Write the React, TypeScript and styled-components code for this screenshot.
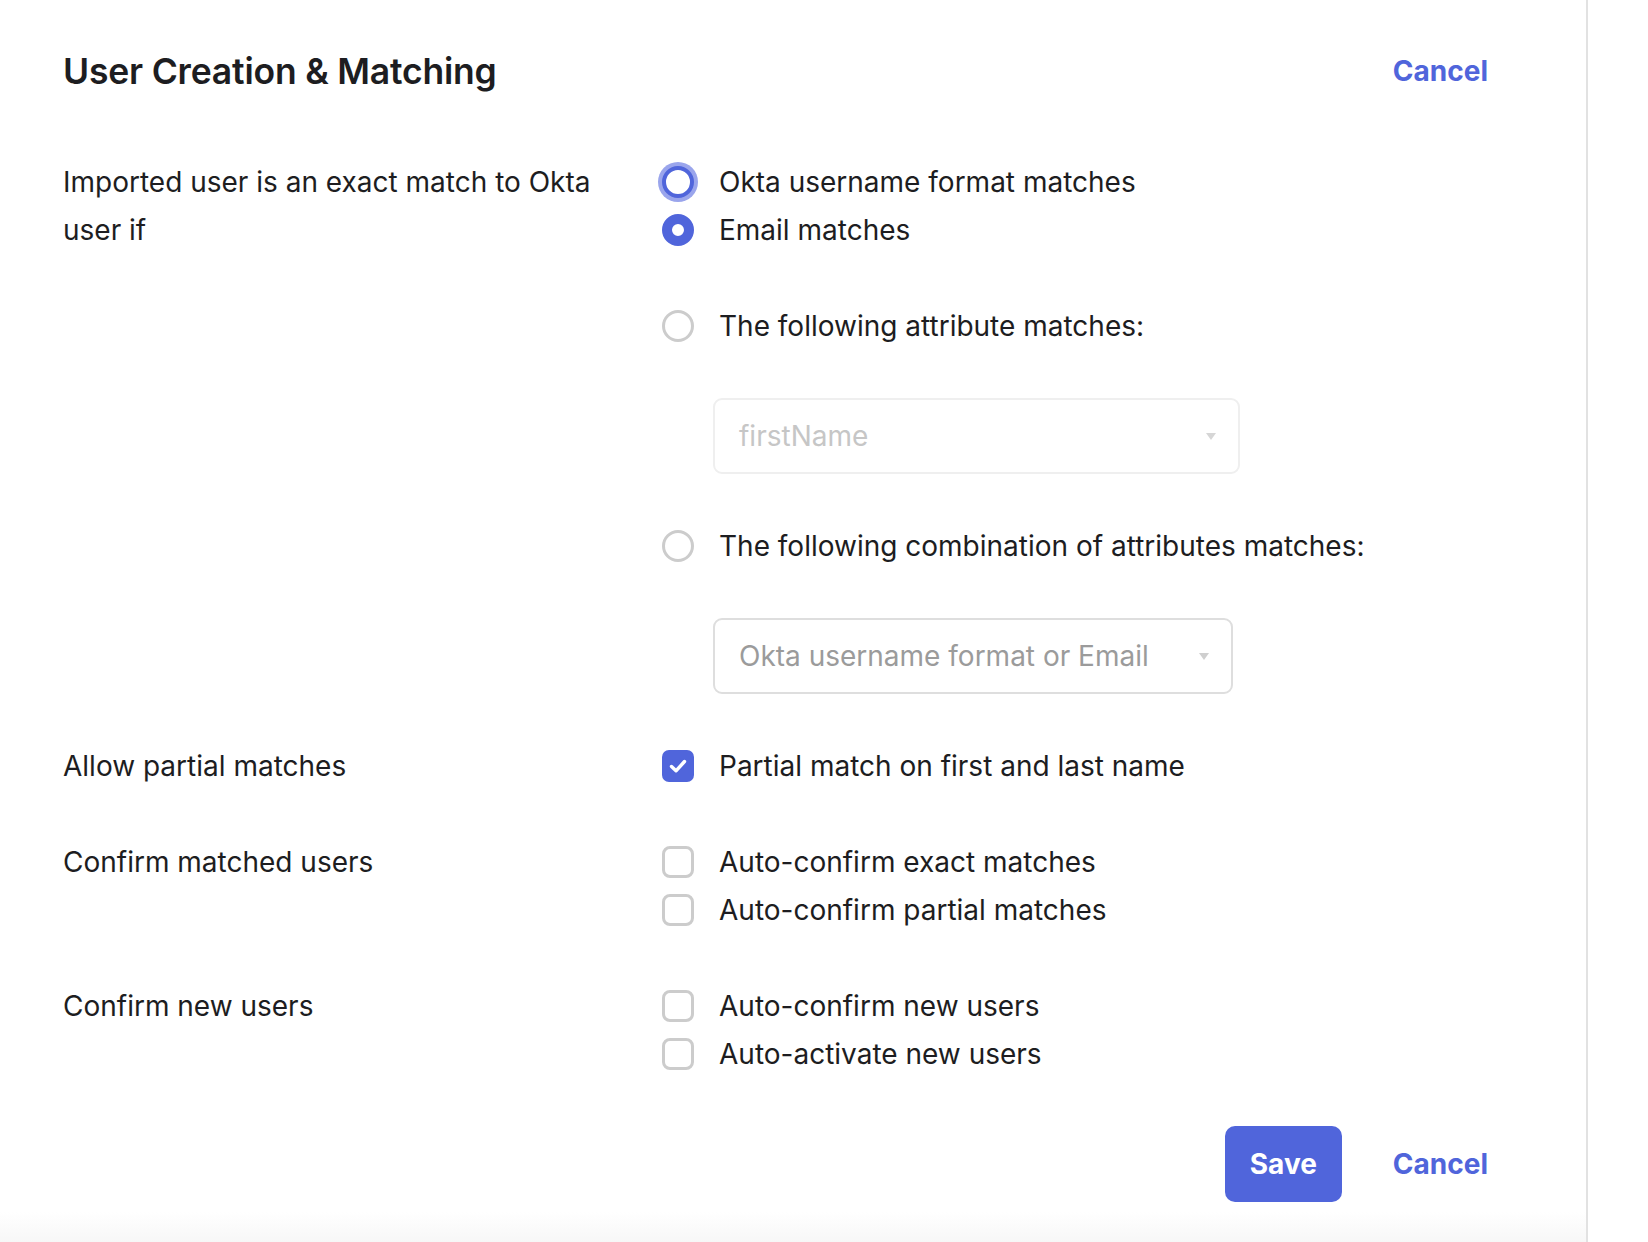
import React from 'react';
import styled, {createGlobalStyle, css} from 'styled-components';

const GlobalStyle = createGlobalStyle`
  html, body {
    margin: 0;
    padding: 0;
    background: #ffffff;
  }
  body {
    font-family: Inter, "Noto Sans", "Liberation Sans", sans-serif;
    color: #1d1d21;
    -webkit-font-smoothing: antialiased;
  }
  * {
    box-sizing: border-box;
  }
`

const BLUE = '#5065db';

const Page = styled.div`
  display: flex;
  width: 100%;
  height: 1242px;
  overflow: hidden;
`

const Panel = styled.section`
  width: 1588px;
  height: 100%;
  padding: 51px 98px 0 63px;
  border-right: 2px solid #e2e2e2;
  background: linear-gradient(to bottom, #ffffff calc(100% - 30px), #f7f7f7 100%);
`

const Header = styled.header`
  display: flex;
  align-items: center;
  justify-content: space-between;
  height: 41px;
`

const Title = styled.h1`
  margin: 0;
  font-size: 35.5px;
  line-height: 41px;
  font-weight: 600;
  letter-spacing: -0.2px;
  color: #1d1d21;
`

const LinkButton = styled.button`
  border: 0;
  background: none;
  padding: 0;
  font-family: inherit;
  font-size: 28px;
  line-height: 41px;
  font-weight: 700;
  color: ${BLUE};
  cursor: pointer;
`

const Form = styled.form`
  display: flex;
  flex-direction: column;
  gap: 48px;
  margin-top: 66px;
`

const FieldRow = styled.div`
  display: grid;
  grid-template-columns: 560px 1fr;
  column-gap: 39px;
`

const FieldLabel = styled.div`
  font-size: 28px;
  line-height: 48px;
  color: #1d1d21;
`

const Options = styled.div`
  display: flex;
  flex-direction: column;
  gap: 48px;
`

const Stack = styled.div`
  display: flex;
  flex-direction: column;
`

const Option = styled.label`
  display: flex;
  align-items: center;
  gap: 25px;
  height: 48px;
  font-size: 28px;
  color: #1d1d21;
  cursor: pointer;
`

type RadioState = 'off' | 'focus' | 'on';

const RadioDot = styled.span<{ $state: RadioState }>`
  flex: none;
  width: 32px;
  height: 32px;
  border-radius: 50%;
  border: 3px solid #cccccc;
  background: #ffffff;

  ${p => p.$state === 'focus' && css`
    border: 4px solid ${BLUE};
    box-shadow: 0 0 0 4px #9aa5ec;
  `}

  ${p => p.$state === 'on' && css`
    border: 10px solid ${BLUE};
  `}
`

const CheckBox = styled.span<{ $checked?: boolean }>`
  flex: none;
  display: flex;
  align-items: center;
  justify-content: center;
  width: 32px;
  height: 32px;
  border-radius: 8px;
  border: 3px solid #cccccc;
  background: #ffffff;

  ${p => p.$checked && css`
    border: 0;
    border-radius: 7px;
    background: ${BLUE};
  `}
`

const SelectBox = styled.div<{ $disabled?: boolean; $width: number }>`
  display: flex;
  align-items: center;
  justify-content: space-between;
  width: ${p => p.$width}px;
  height: 76px;
  margin-left: 51px;
  padding: 0 22px 0 24px;
  border: 2px solid ${p => (p.$disabled ? '#efefef' : '#dedede')};
  border-radius: 9px;
  font-size: 28px;
  color: ${p => (p.$disabled ? '#c6c6c6' : '#9b9b9b')};
`

const Caret = styled.span<{ $disabled?: boolean }>`
  width: 0;
  height: 0;
  border-left: 5px solid transparent;
  border-right: 5px solid transparent;
  border-top: 7px solid ${p => (p.$disabled ? '#d6d6d6' : '#cfcfcf')};
`

const Footer = styled.div`
  display: flex;
  justify-content: flex-end;
  align-items: center;
  gap: 51px;
  margin-top: 48px;
`

const PrimaryButton = styled.button`
  height: 76px;
  padding: 0 25px;
  border: 0;
  border-radius: 10px;
  background: ${BLUE};
  color: #ffffff;
  font-family: inherit;
  font-size: 28px;
  font-weight: 700;
  cursor: pointer;
`

const Radio = ({state, children}: { state: RadioState; children: React.ReactNode }) => (
    <Option>
        <RadioDot $state={state}/>
        {children}
    </Option>
);

const Check = ({checked, children}: { checked?: boolean; children: React.ReactNode }) => (
    <Option>
        <CheckBox $checked={checked}>
            {checked && (
                <svg width="22" height="22" viewBox="0 0 22 22">
                    <polyline points="4.5,11.5 9,15.8 17.5,6.5" fill="none" stroke="#fff" strokeWidth="3.4"
                              strokeLinecap="round" strokeLinejoin="round"/>
                </svg>
            )}
        </CheckBox>
        {children}
    </Option>
);

const App = () => {
    return (
        <>
            <GlobalStyle/>
            <Page>
                <Panel>
                    <Header>
                        <Title>User Creation &amp; Matching</Title>
                        <LinkButton type="button">Cancel</LinkButton>
                    </Header>

                    <Form onSubmit={e => e.preventDefault()}>
                        <FieldRow>
                            <FieldLabel>Imported user is an exact match to Okta user if</FieldLabel>
                            <Options>
                                <Stack>
                                    <Radio state="focus">Okta username format matches</Radio>
                                    <Radio state="on">Email matches</Radio>
                                </Stack>
                                <Radio state="off">The following attribute matches:</Radio>
                                <SelectBox $disabled $width={527}>
                                    firstName
                                    <Caret $disabled/>
                                </SelectBox>
                                <Radio state="off">The following combination of attributes matches:</Radio>
                                <SelectBox $width={520}>
                                    Okta username format or Email
                                    <Caret/>
                                </SelectBox>
                            </Options>
                        </FieldRow>

                        <FieldRow>
                            <FieldLabel>Allow partial matches</FieldLabel>
                            <Stack>
                                <Check checked>Partial match on first and last name</Check>
                            </Stack>
                        </FieldRow>

                        <FieldRow>
                            <FieldLabel>Confirm matched users</FieldLabel>
                            <Stack>
                                <Check>Auto-confirm exact matches</Check>
                                <Check>Auto-confirm partial matches</Check>
                            </Stack>
                        </FieldRow>

                        <FieldRow>
                            <FieldLabel>Confirm new users</FieldLabel>
                            <Stack>
                                <Check>Auto-confirm new users</Check>
                                <Check>Auto-activate new users</Check>
                            </Stack>
                        </FieldRow>
                    </Form>

                    <Footer>
                        <PrimaryButton type="button">Save</PrimaryButton>
                        <LinkButton type="button">Cancel</LinkButton>
                    </Footer>
                </Panel>
            </Page>
        </>
    );
};

export default App;
